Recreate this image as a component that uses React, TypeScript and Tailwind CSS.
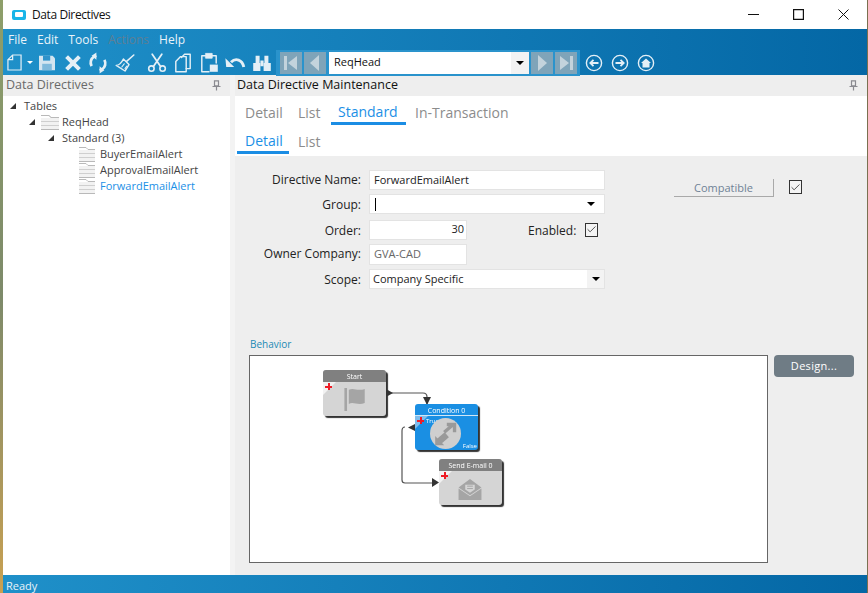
import { Check } from "lucide-react";

const font = { fontFamily: '"Open Sans", "Liberation Sans", sans-serif' };

const ToolIcon = ({ children, className = "" }: { children: React.ReactNode; className?: string }) => (
  <svg viewBox="-3 -3 30 30" className={`w-[24px] h-[24px] shrink-0 ${className}`} fill="none" stroke="#e4eff6" strokeWidth="2" strokeLinejoin="round" strokeLinecap="round">
    {children}
  </svg>
);

const toolbarIcons = [
  { key: "save", gap: "ml-[2px]", icon: <><path d="M2 3h17l3 3v15H2z" fill="#d3e5f0" stroke="none" /><path d="M7 3h9v6H7z" fill="#2e93cb" stroke="none" /><path d="M6 13h12v8H6z" fill="#7fbadc" stroke="none" /></> },
  { key: "close", gap: "ml-[2px]", icon: <path d="M4 4l16 16M20 4L4 20" strokeWidth="5" strokeLinecap="butt" /> },
  { key: "refresh", gap: "ml-[1px]", icon: <><path d="M4 16a9 9 0 0 1 3-12l3-1" strokeWidth="3.4" strokeLinecap="butt" /><path d="M10 -1v9L4 3z" fill="#e4eff6" stroke="none" /><path d="M20 8a9 9 0 0 1-3 12l-3 1" strokeWidth="3.4" strokeLinecap="butt" /><path d="M14 25v-9l6 5z" fill="#e4eff6" stroke="none" /></> },
  { key: "broom", gap: "ml-[3px]", icon: <><path d="M14 10l9-8" strokeWidth="2" /><path d="M10 7l7 7-5 8-11-7c4 0 7-4 9-8z" strokeWidth="1.8" /><path d="M8 17l3-4M12 19l2-3" strokeWidth="1.4" /></> },
  { key: "cut", gap: "ml-[8px]", icon: <><circle cx="5" cy="19" r="3.4" strokeWidth="2" /><circle cx="19" cy="19" r="3.4" strokeWidth="2" /><path d="M7.500 16.500L18 1M16.500 16.500L6 1" strokeWidth="2.2" /></> },
  { key: "copy", gap: "ml-[2px]", icon: <><path d="M10 5l4-4h7v18h-5" strokeWidth="1.8" /><path d="M3 10l6-6h7v19H3z" strokeWidth="1.8" /></> },
  { key: "paste", gap: "ml-[2px]", icon: <><path d="M8 3H3v20h9M16 3h5v9" strokeWidth="1.8" /><path d="M8 0h8v6H8z" fill="#e4eff6" strokeWidth="1" /><path d="M13 14h10v9H13z" fill="#e4eff6" stroke="none" /></> },
  { key: "undo", gap: "ml-[2px]", icon: <><path d="M7 11c6-6 14-3 16 6" strokeWidth="3.6" strokeLinecap="butt" /><path d="M0 6l11 11H1z" fill="#e4eff6" stroke="none" /></> },
  { key: "binoculars", gap: "ml-[3px]", icon: <><path d="M1 12h9v10H1zM14 12h9v10h-9z" fill="#e4eff6" stroke="none" /><path d="M4 3h5v9H4zM15 3h5v9h-5zM10 9h4v7h-4z" fill="#e4eff6" stroke="none" /></> },
];

const NavButton = ({ dir, end }: { dir: "left" | "right"; end?: boolean }) => (
  <div className="w-[22px] h-[22px] bg-[#7fa4b9] flex items-center justify-center">
    <svg viewBox="0 0 16 16" className="w-[16px] h-[16px]" fill="#c3d3dc">
      {dir === "left" ? (
        <>
          {end && <rect x="1" y="1" width="3" height="14" />}
          <path d={end ? "M14 1v14L5 8z" : "M12 0v16L3 8z"} />
        </>
      ) : (
        <>
          <path d={end ? "M2 1v14l9-7z" : "M4 0v16l9-8z"} />
          {end && <rect x="12" y="1" width="3" height="14" />}
        </>
      )}
    </svg>
  </div>
);

const CircleIcon = ({ children }: { children: React.ReactNode }) => (
  <svg viewBox="0 0 18 18" className="w-[18px] h-[18px]" fill="none" stroke="#e4eff6" strokeWidth="1.4">
    <circle cx="9" cy="9" r="7.6" />
    {children}
  </svg>
);

const Pin = () => (
  <svg viewBox="0 0 9 11" className="w-[9px] h-[11px]" fill="none" stroke="#8a8a90" strokeWidth="1.2">
    <path d="M2.5 .8h4v5h-4zM.5 6.5h8M4.5 6.5v4" />
  </svg>
);

const DocIcon = ({ w }: { w: string }) => (
  <svg viewBox="0 0 16 15" preserveAspectRatio="none" className={`${w} h-[15px] shrink-0`} fill="none" stroke="#b9b9b9" strokeWidth="1">
    <path d="M0 3h16v11H0z" fill="#f2f2f2" stroke="none" />
    <path d="M0 .5h7l2 2h7" />
    <path d="M0 6.500h16M0 10.500h16" stroke="#cfcfcf" />
    <path d="M0 14.500h16" />
  </svg>
);

const Arrow = () => (
  <svg viewBox="0 0 6 6" className="w-[6px] h-[6px] shrink-0">
    <path d="M6 0v6H0z" fill="#333" />
  </svg>
);

const Input = ({ children, className = "" }: { children?: React.ReactNode; className?: string }) => (
  <div className={`border border-[#e3e3e3] bg-white h-[20px] flex items-center text-[11px] text-[#222] ${className}`}>
    {children}
  </div>
);

const Caret = () => <div className="w-0 h-0 border-x-[4px] border-x-transparent border-t-[4px] border-t-black" />;

const Tick = () => (
  <div className="w-[13px] h-[14px] border border-[#333] bg-[#f4f4f4] flex items-center justify-center">
    <Check className="w-[11px] h-[11px] text-[#444]" strokeWidth={2} />
  </div>
);

const FormLabel = ({ text, className = "" }: { text: string; className?: string }) => (
  <div className={`w-[126px] text-right text-[12px] text-[#222] mr-[8px] shrink-0 ${className}`}>{text}</div>
);

const Plus = ({ className }: { className: string }) => (
  <div className={`absolute w-[7px] h-[7px] ${className}`}>
    <div className="absolute left-[2.5px] top-0 w-[2px] h-[7px] bg-[#ee1c25]" />
    <div className="absolute top-[2.5px] left-0 w-[7px] h-[2px] bg-[#ee1c25]" />
  </div>
);

const FlowNode = ({ title, left, top, blue, children }: { title: string; left: string; top: string; blue?: boolean; children: React.ReactNode }) => (
  <div className={`absolute ${left} ${top} w-[63px] h-[46px] rounded-[3px] shadow-[2px_2px_1px_#333] blur-[0.3px] ${blue ? "bg-[#1a8fe3]" : "bg-[#d5d5d5]"}`}>
    <div className={`h-[12px] rounded-t-[3px] text-center text-[7px] leading-[13px] text-white ${blue ? "border-b border-[#d0e6f6]" : "bg-[#808080]"}`}>
      {title}
    </div>
    <svg viewBox="0 0 12 12" className="absolute left-0 top-[12px] w-[13px] h-[13px]">
      <path d="M0 0h12L0 12z" fill={blue ? "#7fbdec" : "#f2f2f2"} />
    </svg>
    <Plus className="left-[2px] top-[13px]" />
    {children}
  </div>
);

export default function App() {
  return (
    <div className="w-[868px] h-[593px] flex bg-white overflow-hidden" style={font}>
      <div className="w-[3px] h-full bg-gradient-to-b from-[#8e9f6a] via-[#7d8a6a] to-[#c8a050] shrink-0" />
      <div className="flex-1 flex flex-col min-w-0">
        {/* title bar */}
        <div className="h-[29px] flex items-center bg-white shrink-0">
          <div className="ml-[9px] w-[14px] h-[10px] rounded-[2px] bg-[#19b5e8] flex items-center justify-center">
            <div className="w-[8px] h-[5px] bg-white rounded-[1px]" />
          </div>
          <span className="ml-[6px] text-[12px] text-[#111] tracking-[-0.4px]">Data Directives</span>
          <div className="ml-auto flex items-center">
            <svg viewBox="0 0 11 11" className="w-[11px] h-[11px] mr-[34px]" stroke="#111" strokeWidth="1"><path d="M0 5.5h11" /></svg>
            <svg viewBox="0 0 11 11" className="w-[11px] h-[11px] mr-[34px]" fill="none" stroke="#111" strokeWidth="1.2"><path d="M.6.6h9.8v9.8H.6z" /></svg>
            <svg viewBox="0 0 11 11" className="w-[11px] h-[11px] mr-[18px]" stroke="#111" strokeWidth="1"><path d="M.5.5l10 10M10.5.5l-10 10" /></svg>
          </div>
        </div>

        {/* menu + toolbar */}
        <div className="h-[46px] shrink-0 bg-gradient-to-r from-[#1f90c9] to-[#0467a5] flex flex-col">
          <div className="h-[21px] flex items-center pl-[5px] gap-[10px] text-[12px] text-[#eaf3f9] pt-[1px]">
            <span>File</span>
            <span>Edit</span>
            <span>Tools</span>
            <span className="text-[#5d7f95]">Actions</span>
            <span>Help</span>
          </div>
          <div className="h-[25px] flex items-center relative">
            <svg viewBox="0 0 16 18" className="w-[15px] h-[17px] ml-[4px]" fill="none" stroke="#e4eff6" strokeWidth="1.3">
              <path d="M6 1h9v16H1V6z" />
              <path d="M6 1v5H1" />
            </svg>
            <div className="ml-[5px] w-0 h-0 border-x-[3px] border-x-transparent border-t-[3px] border-t-white" />
            {toolbarIcons.map((t) => (
              <ToolIcon key={t.key} className={t.gap}>
                {t.icon}
              </ToolIcon>
            ))}
            <div className="ml-[2px] w-[304px] h-[26px] bg-[#2a93cc] flex items-center gap-[2px] pl-[4px]">
              <NavButton dir="left" end />
              <NavButton dir="left" />
              <div className="ml-[1px] w-[200px] h-[22px] bg-white flex items-center">
                <span className="pl-[5px] text-[11px] text-[#111] flex-1">ReqHead</span>
                <div className="w-[18px] h-full bg-[#f3f3f3] flex items-center justify-center">
                  <Caret />
                </div>
              </div>
              <NavButton dir="right" />
              <NavButton dir="right" end />
            </div>
            <div className="ml-[5px] flex gap-[8px]">
              <CircleIcon><path d="M13.5 9h-8M8.5 5.8L5.3 9l3.2 3.2" strokeWidth="1.8" /></CircleIcon>
              <CircleIcon><path d="M4.5 9h8M9.5 5.8L12.7 9l-3.2 3.2" strokeWidth="1.8" /></CircleIcon>
              <CircleIcon><path d="M4 9l5-4.5L14 9h-1.5v4.5h-7V9z" fill="#e4eff6" stroke="none" /></CircleIcon>
            </div>
          </div>
        </div>

        {/* panels */}
        <div className="flex-1 flex min-h-0">
          <aside className="w-[227px] shrink-0 flex flex-col">
            <div className="h-[21px] bg-[#eeeeee] flex items-center pl-[3px] pr-[9px] justify-between text-[12.5px] text-[#6a6a6a]">
              <span>Data Directives</span>
              <Pin />
            </div>
            <div className="pt-[2px] text-[11px] text-[#444] leading-[16px]">
              <div className="h-[16px] flex items-center pl-[7px]"><Arrow /><span className="ml-[8px]">Tables</span></div>
              <div className="h-[16px] flex items-center pl-[26px]"><Arrow /><span className="ml-[6px]"><DocIcon w="w-[18px]" /></span><span className="ml-[3px]">ReqHead</span></div>
              <div className="h-[16px] flex items-center pl-[45px]"><Arrow /><span className="ml-[8px]">Standard (3)</span></div>
              {["BuyerEmailAlert", "ApprovalEmailAlert", "ForwardEmailAlert"].map((n, i) => (
                <div key={n} className="h-[16px] flex items-center pl-[76px]">
                  <DocIcon w="w-[16px]" />
                  <span className={`ml-[5px] ${i === 2 ? "text-[#1b90e6]" : ""}`}>{n}</span>
                </div>
              ))}
            </div>
          </aside>
          <div className="w-[5px] bg-[#f3f3f3] shrink-0" />
          <main className="flex-1 flex flex-col min-w-0 bg-[#eeeeee]">
            <div className="h-[21px] flex items-center justify-between pl-[2px] pr-[9px] text-[12.5px] text-[#111]">
              <span>Data Directive Maintenance</span>
              <Pin />
            </div>
            <div className="h-[60px] bg-white pl-[2px] text-[14px] text-[#8c8c8c] shrink-0">
              <div className="flex h-[28px]">
                <div className="w-[53px] pl-[8px] pt-[6px]">Detail</div>
                <div className="w-[41px] pl-[8px] pt-[6px]">List</div>
                <div className="w-[75px] pl-[7px] pt-[5px] text-[#1b90e6] border-b-[3px] border-[#1b8de4] h-[29px]">Standard</div>
                <div className="ml-[2px] pl-[7px] pt-[6px]">In-Transaction</div>
              </div>
              <div className="flex h-[29px] mt-[1px]">
                <div className="w-[52px] pl-[8px] pt-[5px] text-[#1b90e6] border-b-[3px] border-[#1b8de4]">Detail</div>
                <div className="pl-[9px] pt-[6px]">List</div>
              </div>
            </div>

            <div className="flex pt-[14px] shrink-0">
              <div className="w-[370px] flex flex-col">
                <div className="flex items-center h-[20px]">
                  <FormLabel text="Directive Name:" />
                  <Input className="w-[236px] pl-[4px]">ForwardEmailAlert</Input>
                </div>
                <div className="flex items-center h-[20px] mt-[4px]">
                  <FormLabel text="Group:" className="pt-[1px]" />
                  <Input className="w-[236px] pl-[5px] justify-between pr-[9px]">
                    <div className="w-px h-[13px] bg-black" />
                    <Caret />
                  </Input>
                </div>
                <div className="flex items-center h-[19px] mt-[6px]">
                  <FormLabel text="Order:" className="pt-[3px]" />
                  <Input className="w-[98px] h-[19px] justify-end pr-[2px]">30</Input>
                  <span className="ml-[61px] pt-[3px] text-[12px] text-[#222]">Enabled:</span>
                  <div className="ml-[9px]"><Tick /></div>
                </div>
                <div className="flex items-center h-[21px] mt-[5px]">
                  <FormLabel text="Owner Company:" className="pb-[1px]" />
                  <Input className="w-[98px] h-[21px] pl-[4px] bg-[#f3f3f3] text-[#666]">GVA-CAD</Input>
                </div>
                <div className="flex items-center h-[20px] mt-[4px]">
                  <FormLabel text="Scope:" className="pt-[1px]" />
                  <div className="w-[236px] h-[20px] border border-[#e3e3e3] bg-white flex items-center pl-[3px] text-[11px] text-[#222]">
                    <span className="flex-1">Company Specific</span>
                    <div className="w-[17px] h-full bg-[#f3f3f3] flex items-center justify-center">
                      <Caret />
                    </div>
                  </div>
                </div>
              </div>
              <div className="ml-[69px] mt-[9px] flex items-start">
                <div className="w-[100px] h-[18px] border-r border-b border-[#a9a9a9] text-center text-[11px] leading-[17px] text-[#6f8296]">Compatible</div>
                <div className="ml-[15px] mt-[1px]"><Tick /></div>
              </div>
            </div>

            <div className="pl-[15px] mt-[49px] text-[10px] leading-[12px] text-[#1c8ab5]">Behavior</div>
            <div className="flex pl-[14px] mt-[5px] items-start">
              <div className="relative w-[519px] h-[208px] border border-[#666] bg-white shrink-0">
                <svg className="absolute inset-0 w-full h-full" viewBox="0 0 517 206" fill="none" stroke="#555" strokeWidth="1.2">
                  <path d="M137 37h36q4 0 4 4v9" />
                  <path d="M155 71q-3 0-3 4v49q0 3 3 3h28" />
                  <path d="M136 33v8l7-4z" fill="#333" stroke="none" />
                  <path d="M173 41h8l-4 8z" fill="#333" stroke="none" />
                  <path d="M165 68v7l-7-3.500z" fill="#333" stroke="none" />
                  <path d="M182 122v9l7-4.500z" fill="#333" stroke="none" />
                </svg>
                <FlowNode title="Start" left="left-[73px]" top="top-[14px]">
                  <svg viewBox="0 0 24 26" className="absolute left-[20px] top-[18px] w-[24px] h-[23px]">
                    <path d="M0 0h3v26H0z" fill="#a5a5a5" />
                    <path d="M5 2c6-3 9 2 18-1v16c-8 3-13-2-18 1z" fill="#a5a5a5" />
                  </svg>
                </FlowNode>
                <FlowNode title="Condition 0" left="left-[165px]" top="top-[48px]" blue>
                  <span className="absolute left-[11px] top-[13px] text-[6px] leading-[8px] text-white">True</span>
                  <div className="absolute left-[15px] top-[14px] w-[31px] h-[31px] rounded-full bg-[#cfcfcf]">
                    <svg viewBox="0 0 24 24" className="w-full h-full" fill="none" stroke="#9a9a9a" strokeWidth="2.6">
                      <path d="M11 11l7-6M13 5h6v6" />
                      <path d="M13 13l-7 6" strokeWidth="5" />
                      <path d="M4 14v7h7z" fill="#9a9a9a" stroke="none" />
                    </svg>
                  </div>
                  <span className="absolute right-[1px] bottom-0 text-[6px] leading-[8px] text-white">False</span>
                </FlowNode>
                <FlowNode title="Send E-mail 0" left="left-[189px]" top="top-[103px]">
                  <svg viewBox="0 0 24 22" className="absolute left-[19px] top-[20px] w-[24px] h-[21px]" fill="#a5a5a5">
                    <path d="M0 9L12 0l12 9-12 8z" />
                    <path d="M0 10l12 8 12-8v12H0z" />
                    <path d="M7 6h10v5l-5 3.500-5-3.500z" fill="#d5d5d5" />
                    <path d="M9 7.500h6M9 10h6" stroke="#a5a5a5" strokeWidth="1" />
                  </svg>
                </FlowNode>
              </div>
              <button className="ml-[6px] w-[80px] h-[22px] rounded-[4px] bg-[#6f7c85] text-[11px] text-white tracking-[0.3px]">Design...</button>
            </div>
          </main>
        </div>

        {/* status bar */}
        <div className="h-[18px] shrink-0 bg-gradient-to-r from-[#1f90c9] to-[#0467a5] pl-[3px] text-[11px] leading-[21px] text-[#e8f2f8]">Ready</div>
      </div>
      <div className="w-px h-full bg-[#7a7050] shrink-0" />
    </div>
  );
}
